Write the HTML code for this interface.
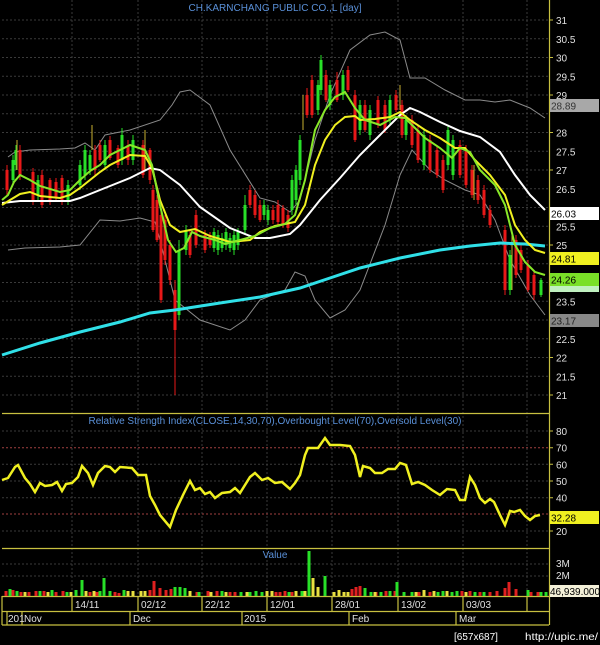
<!DOCTYPE html>
<html><head><meta charset="utf-8"><style>
html,body{margin:0;padding:0;background:#000;width:600px;height:645px;overflow:hidden}
svg{display:block}
text{font-family:"Liberation Sans",sans-serif;font-size:10px}
</style></head><body>
<svg width="600" height="645" viewBox="0 0 600 645">
<rect width="600" height="645" fill="#000"/>
<!-- horizontal grid main -->
<g stroke="#3a3a3a" stroke-width="1" stroke-dasharray="2 2">
<path d="M2 20H549M2 38.75H549M2 57.5H549M2 76.25H549M2 95H549M2 113.75H549M2 132.5H549M2 151.25H549M2 170H549M2 188.75H549M2 207.5H549M2 226.25H549M2 245H549M2 263.75H549M2 282.5H549M2 301.25H549M2 320H549M2 338.75H549M2 357.5H549M2 376.25H549M2 395H549"/>
<path d="M2 431H549M2 464.3H549M2 481H549M2 497.7H549M2 531H549M2 564H549M2 576H549"/>
<path d="M72 0V596M138 0V596M202 0V596M267 0V596M332 0V596M398 0V596M463 0V596M527 0V596"/>
</g>
<!-- panel separators -->
<g stroke="#c8c040" stroke-width="1.2">
<path d="M549.5 0V625M2 413.5H549M2 548.5H549M2 596.5H549M2 611.5H549M2 625H549M2 596V625"/>
<path d="M72 597V611M138 597V611M202 597V611M267 597V611M332 597V611M398 597V611M463 597V611M527 597V611"/>
<path d="M7 611V625M22 611V625M130 611V625M242 611V625M349 611V625M456 611V625"/>
</g>
<path d="M2 447.7H549M2 514H549" stroke="#a04040" stroke-dasharray="2 2"/>
<!-- axis ticks -->
<g stroke="#c8c040"><path d="M549 20h4M549 57.5h4M549 95h4M549 132.5h4M549 170h4M549 207.5h4M549 245h4M549 282.5h4M549 320h4M549 357.5h4M549 395h4M549 431h4M549 447.7h4M549 464.3h4M549 481h4M549 497.7h4M549 514h4M549 531h4"/></g>
<!-- bollinger -->
<g fill="none" stroke="#8a8a8a" stroke-width="1">
<polyline points="8,157 15,152 30,150 60,149 75,148 85,143 95,150 105,135 130,130 160,120 172,105 180,92 190,90 210,105 230,150 260,198 275,202 290,212 300,200 315,140 330,95 350,50 370,35 385,32 400,40 410,78 425,78 445,90 465,100 480,100 495,102 510,100 530,108 545,118"/>
<polyline points="8,250 25,248 60,247 80,245 100,220 120,221 140,218 155,222 160,240 175,300 200,320 230,330 245,320 260,300 285,290 295,272 305,276 315,300 330,318 345,310 360,290 385,225 400,175 412,150 430,170 445,180 465,190 480,195 495,220 510,260 530,295 545,315"/>
</g>
<!-- candles -->
<g stroke="#e81818" stroke-width="1"><path d="M7 165V195M20 145V180M33 168V205M42 170V208M50 178V205M56 178V202M62 175V205M95 145V175M100 140V162M110 136V160M118 145V168M128 140V165M143 140V178M150 148V184M153 185V232M157 195V242M161 210V303M165 215V265M170 240V285M175 280V395M190 230V258M196 210V248M205 230V253M210 232V248M250 185V208M255 190V218M260 200V222M273 205V224M278 200V225M283 205V228M288 210V232M307 88V118M312 75V118M326 70V102M337 72V102M348 66V92M355 90V142M365 100V132M378 96V128M385 100V133M396 90V112M402 100V138M412 115V148M418 125V163M430 135V173M437 145V178M443 155V193M460 140V178M466 145V188M472 165V198M478 175V204M484 185V218M490 205V228M505 225V295M516 235V278M521 245V273M528 260V292M534 270V300"/></g>
<g stroke="#e81818" stroke-width="3"><path d="M7 170V190M20 150V175M33 172V200M42 175V205M50 180V200M56 182V198M62 178V200M95 150V170M100 145V160M110 140V158M118 148V165M128 145V160M143 145V175M150 150V180M153 190V230M157 200V240M161 215V300M165 220V260M170 245V280M175 290V330M190 235V255M196 215V245M205 235V250M210 235V245M250 190V205M255 195V215M260 205V220M273 210V220M278 205V222M283 208V225M288 215V228M307 95V115M312 80V115M326 75V100M337 80V100M348 70V90M355 95V140M365 105V130M378 100V125M385 105V130M396 95V110M402 105V135M412 120V145M418 130V160M430 140V170M437 150V175M443 160V190M460 145V175M466 150V185M472 170V195M478 180V200M484 190V215M490 210V225M505 230V290M516 240V275M521 250V270M528 265V290M534 275V295"/></g>
<g stroke="#28e028" stroke-width="1"><path d="M13 155V185M16 145V170M38 175V200M68 180V205M80 160V190M85 145V180M90 150V175M105 140V170M122 128V165M133 135V165M179 240V320M186 225V255M214 228V252M218 230V255M222 233V252M226 228V250M230 233V252M234 230V255M238 228V250M245 195V235M264 200V220M268 205V225M292 175V215M296 165V205M300 135V185M318 80V115M321 55V95M330 80V110M343 70V100M360 100V135M370 105V140M390 95V125M406 115V140M424 130V170M448 125V170M453 135V180M510 250V295M541 278V297"/></g>
<g stroke="#28e028" stroke-width="3"><path d="M13 160V180M16 150V165M38 180V195M68 185V200M80 165V185M85 150V175M90 155V170M105 145V165M122 135V160M133 140V160M179 250V315M186 230V250M214 232V248M218 235V250M222 238V248M226 232V245M230 238V248M234 235V250M238 232V245M245 205V230M264 205V215M268 210V220M292 180V210M296 170V200M300 140V180M318 85V110M321 60V90M330 85V105M343 75V95M360 105V130M370 110V135M390 100V120M406 120V135M424 135V165M448 130V165M453 140V175M510 255V290M541 280V295"/></g>
<g stroke="#c8b030" stroke-width="1"><path d="M17 140V170M92 125V150M145 130V170M303 95V130M400 85V110M474 165V200M512 235V290"/></g>
<!-- MAs -->
<polyline fill="none" stroke="#30e0e8" stroke-width="3" points="2,355 40,343 80,332 120,322 150,313 175,310 220,303 260,297 300,288 330,278 360,268 400,258 440,250 470,246 500,243 525,244 545,246"/>
<polyline fill="none" stroke="#ffffff" stroke-width="2" points="2,203 20,201 70,201 80,198 100,190 130,178 150,168 160,170 180,185 200,207 230,228 255,238 270,238 290,234 300,225 320,200 340,178 360,155 380,135 400,115 410,108 420,112 440,122 460,131 480,137 500,152 515,175 530,195 545,210"/>
<polyline fill="none" stroke="#f0f020" stroke-width="2" points="2,205 10,200 20,194 30,192 40,196 60,198 70,195 80,188 90,180 100,172 110,165 120,160 130,155 145,156 152,168 160,200 170,225 180,232 195,229 210,236 230,242 250,240 260,232 275,226 295,222 305,205 315,165 325,140 335,125 345,117 355,116 360,120 375,119 390,117 400,112 410,120 425,130 440,138 455,148 465,148 475,160 490,175 505,195 515,225 525,240 535,250 545,253"/>
<polyline fill="none" stroke="#88e828" stroke-width="2" points="2,200 8,195 14,182 20,175 30,180 40,186 60,192 70,190 80,180 90,171 100,165 110,155 120,150 130,145 145,150 152,165 160,205 168,240 176,252 184,248 192,232 200,236 215,240 225,244 240,240 255,236 270,228 285,224 295,215 305,180 315,130 325,110 335,97 345,92 355,108 365,120 380,125 395,117 405,118 415,128 425,138 440,148 452,158 460,148 470,152 480,170 495,185 505,205 515,245 525,262 535,272 545,275"/>
<!-- title -->
<text x="275" y="11" fill="#5a90d8" font-size="10" text-anchor="middle">CH.KARNCHANG PUBLIC CO.,L [day]</text>
<!-- price labels -->
<g fill="#e0e0e0" font-size="10">
<text x="556" y="24">31</text><text x="556" y="42.75">30.5</text><text x="556" y="61.5">30</text><text x="556" y="80.25">29.5</text><text x="556" y="99">29</text><text x="556" y="136.5">28</text><text x="556" y="155.25">27.5</text><text x="556" y="174">27</text><text x="556" y="192.75">26.5</text><text x="556" y="230.25">25.5</text><text x="556" y="249">25</text><text x="556" y="305.25">23.5</text><text x="556" y="342.75">22.5</text><text x="556" y="361.5">22</text><text x="556" y="380.25">21.5</text><text x="556" y="399">21</text>
<text x="556" y="435">80</text><text x="556" y="451.7">70</text><text x="556" y="468.3">60</text><text x="556" y="485">50</text><text x="556" y="501.7">40</text><text x="556" y="535">20</text>
<text x="556" y="567">3M</text><text x="556" y="579">2M</text>
</g>
<rect x="550" y="99" width="49" height="13" fill="#a8a8a8"/><text x="551" y="109.5" fill="#333">28.89</text>
<rect x="550" y="207" width="49" height="13" fill="#fff"/><text x="551" y="217.5" fill="#000">26.03</text>
<rect x="550" y="252" width="49" height="13" fill="#f0f020"/><text x="551" y="262.5" fill="#000">24.81</text>
<rect x="550" y="279" width="49" height="13" fill="#c0f0c0"/>
<rect x="550" y="273" width="49" height="13" fill="#7ae028"/><text x="551" y="283.5" fill="#000">24.26</text>
<rect x="550" y="314" width="49" height="13" fill="#888"/><text x="551" y="324.5" fill="#222">23.17</text>
<rect x="550" y="511" width="49" height="13" fill="#f0f020"/><text x="551" y="521.5" fill="#000">32.28</text>
<rect x="550" y="585" width="49" height="12" fill="#f4f0d8"/><text x="550" y="595" fill="#000" font-size="9.5">46,939.000</text>
<!-- RSI -->
<text x="275" y="424" fill="#5a90d8" font-size="9.5" text-anchor="middle">Relative Strength Index(CLOSE,14,30,70),Overbought Level(70),Oversold Level(30)</text>
<polyline fill="none" stroke="#f0f020" stroke-width="2.5" points="2,480 8,478 15,467 18,465 25,478 30,484 35,492 40,483 45,486 52,485 57,482 62,491 66,484 72,483 78,477 82,466 88,473 93,485 98,473 105,466 110,467 115,472 120,467 132,468 138,475 146,475 150,496 155,505 160,515 170,527 176,510 183,495 190,481 195,490 200,488 205,494 210,492 215,498 222,493 230,492 235,488 240,493 250,477 255,473 262,480 268,478 275,483 282,482 290,489 295,483 300,475 305,455 308,448 318,448 325,438 330,445 340,445 350,446 355,455 360,477 363,466 370,468 375,473 382,473 388,469 395,469 400,463 406,465 412,484 418,482 425,485 432,490 440,495 447,489 455,490 460,500 465,500 470,477 475,485 480,498 485,503 490,499 494,502 500,515 505,525 510,511 514,512 520,510 525,516 530,520 535,516 540,515"/>
<!-- Volume -->
<text x="275" y="558" fill="#5a90d8" font-size="9.5" text-anchor="middle">Value</text>
<g stroke-width="3">
<path d="M6 596v-5M13 596v-6M21 596v-4M29 596v-4M36 596v-5M44 596v-5M56 596v-4M63 596v-5M90 596v-4M97 596v-4M115 596v-4M119 596v-3M150 596v-6M154 596v-15M160 596v-8M166 596v-6M171 596v-7M197 596v-4M208 596v-5M217 596v-5M230 596v-4M235 596v-4M276 596v-4M280 596v-4M285 596v-5M292 596v-4M352 596v-7M356 596v-9M360 596v-10M376 596v-4M386 596v-5M395 596v-5M419 596v-4M430 596v-4M462 596v-5M470 596v-5M480 596v-4M490 596v-4M497 596v-5M505 596v-8M509 596v-14M516 596v-7M531 596v-4M538 596v-4" stroke="#e02020"/>
<path d="M10 596v-7M17 596v-5M40 596v-5M52 596v-6M67 596v-4M76 596v-6M82 596v-16M100 596v-5M104 596v-18M110 596v-5M124 596v-6M175 596v-9M180 596v-9M185 596v-8M199 596v-4M222 596v-5M241 596v-4M250 596v-4M256 596v-5M262 596v-4M289 596v-4M302 596v-5M309 596v-45M325 596v-20M365 596v-8M371 596v-4M381 596v-4M390 596v-5M397 596v-14M404 596v-4M412 596v-4M438 596v-4M443 596v-5M452 596v-4M457 596v-5M475 596v-4M484 596v-4M528 596v-6M541 596v-4M546 596v-4" stroke="#28e028"/>
<path d="M25 596v-4M48 596v-4M71 596v-4M86 596v-5M94 596v-5M128 596v-5M133 596v-5M141 596v-5M145 596v-5M190 596v-5M211 596v-4M226 596v-4M247 596v-4M267 596v-5M272 596v-5M296 596v-5M305 596v-5M313 596v-18M318 596v-9M334 596v-4M339 596v-6M344 596v-4M348 596v-4M375 596v-4M416 596v-4M424 596v-6M434 596v-5M447 596v-5M466 596v-4" stroke="#e8e040"/>
</g>
<!-- date labels -->
<g fill="#e0e0e0" font-size="10">
<text x="75" y="608">14/11</text><text x="141" y="608">02/12</text><text x="205" y="608">22/12</text><text x="270" y="608">12/01</text><text x="335" y="608">28/01</text><text x="401" y="608">13/02</text><text x="466" y="608">03/03</text>
<text x="8" y="622">201</text><text x="24" y="622">Nov</text><text x="133" y="622">Dec</text><text x="244" y="622">2015</text><text x="352" y="622">Feb</text><text x="459" y="622">Mar</text>
</g>
<text x="454" y="640" fill="#fff" font-size="11" font-family="Liberation Mono, monospace">[657x687]</text>
<text x="525" y="640" fill="#fff" font-size="11" font-family="Liberation Mono, monospace" textLength="73" lengthAdjust="spacingAndGlyphs">http://upic.me/</text>
</svg>
</body></html>
